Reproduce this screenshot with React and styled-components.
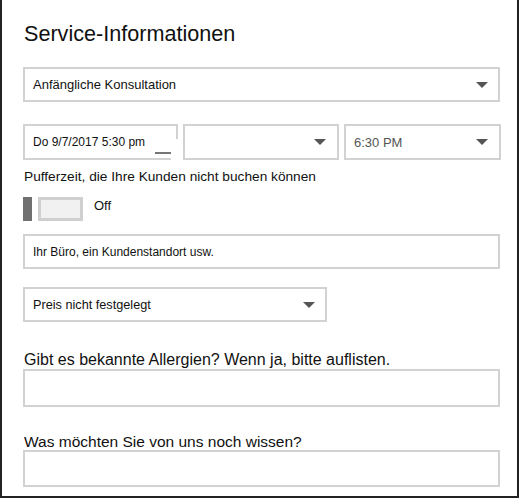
import React from 'react'
import styled, { createGlobalStyle } from 'styled-components'

const Global = createGlobalStyle`
  html, body { margin: 0; padding: 0; background: #fff; }
  body { font-family: "Liberation Sans", Arial, sans-serif; color: #111; }
`

const Frame = styled.div`
  box-sizing: border-box;
  width: 519px;
  height: 498px;
  border: 2px solid #222;
  border-top: none;
  padding: 20px 17px 0 21px;
  display: flex;
  flex-direction: column;
`

const Title = styled.h1`
  margin: 0 0 19px 1px;
  font-size: 21.6px;
  font-weight: 400;
  line-height: 28px;
  color: #111;
`

const Box = styled.div`
  box-sizing: border-box;
  position: relative;
  height: ${p => p.h || 35}px;
  width: ${p => p.w ? `${p.w}px` : '100%'};
  margin-top: ${p => p.mt || 0}px;
  border: 2px solid #d2d2d2;
  background: #fff;
  display: flex;
  align-items: center;
  padding: 0 10px 0 8px;
  font-size: ${p => p.size || 13}px;
  color: ${p => p.muted ? '#555' : '#111'};
  flex-shrink: 0;
`

const Value = styled.span`
  flex: 1;
  white-space: nowrap;
  margin-top: ${p => p.dy || 0}px;
`

const Caret = styled.span`
  width: 0;
  height: 0;
  border-left: 6px solid transparent;
  border-right: 6px solid transparent;
  border-top: 6px solid #555;
  margin-right: ${p => p.mr || 0}px;
`

const Row = styled.div`
  display: flex;
  gap: ${p => p.gap || 5}px;
  margin-top: ${p => p.mt || 0}px;
  align-items: center;
`

const Dash = styled.span`
  position: absolute;
  right: 5px;
  bottom: 4px;
  width: 16px;
  height: 2px;
  background: #777;
`

const Notch = styled.span`
  position: absolute;
  right: -3px;
  bottom: -3px;
  width: 8px;
  height: 22px;
  background: #fff;
`

const Label = styled.div`
  position: relative;
  font-size: ${p => p.size || 13}px;
  line-height: ${p => p.lh || 18}px;
  margin-top: ${p => p.mt || 0}px;
  margin-left: 1px;
  color: #111;
  white-space: nowrap;
`

const ToggleKnob = styled.span`
  width: 9px;
  height: 24px;
  background: #707070;
`

const ToggleTrack = styled.span`
  box-sizing: border-box;
  width: 45px;
  height: 24px;
  border: 3px solid #cfcfcf;
  background: #f1f1f1;
`

const ToggleText = styled.span`
  font-size: 13px;
  margin-left: 5px;
  margin-top: -8px;
`

export default function App() {
  return (
    <>
      <Global />
      <Frame>
        <Title>Service-Informationen</Title>
        <Box>
          <Value>Anfängliche Konsultation</Value>
          <Caret />
        </Box>

        <Row mt={22}>
          <Box w={155} h={36} size={12}>
            <Value>Do 9/7/2017 5:30 pm</Value>
            <Dash />
            <Notch />
          </Box>
          <Box w={156} h={36}>
            <Value />
            <Caret mr={1} />
          </Box>
          <Box w={157} h={36} size={13} muted>
            <Value>6:30 PM</Value>
            <Caret mr={1} />
          </Box>
        </Row>

        <Label size={13.7} mt={8}>Pufferzeit, die Ihre Kunden nicht buchen können</Label>

        <Row mt={11} gap={6}>
          <ToggleKnob />
          <ToggleTrack />
          <ToggleText>Off</ToggleText>
        </Row>

        <Box mt={13} size={12}>
          <Value dy={1}>Ihr Büro, ein Kundenstandort usw.</Value>
        </Box>

        <Box w={304} mt={18} size={12.7}>
          <Value>Preis nicht festgelegt</Value>
          <Caret />
        </Box>

        <Label size={16} lh={20} mt={28}>Gibt es bekannte Allergien? Wenn ja, bitte auflisten.</Label>
        <Box h={38} mt={-1} />

        <Label size={15.5} lh={20} mt={25}>Was möchten Sie von uns noch wissen?</Label>
        <Box h={37} mt={-2} />
      </Frame>
    </>
  )
}
